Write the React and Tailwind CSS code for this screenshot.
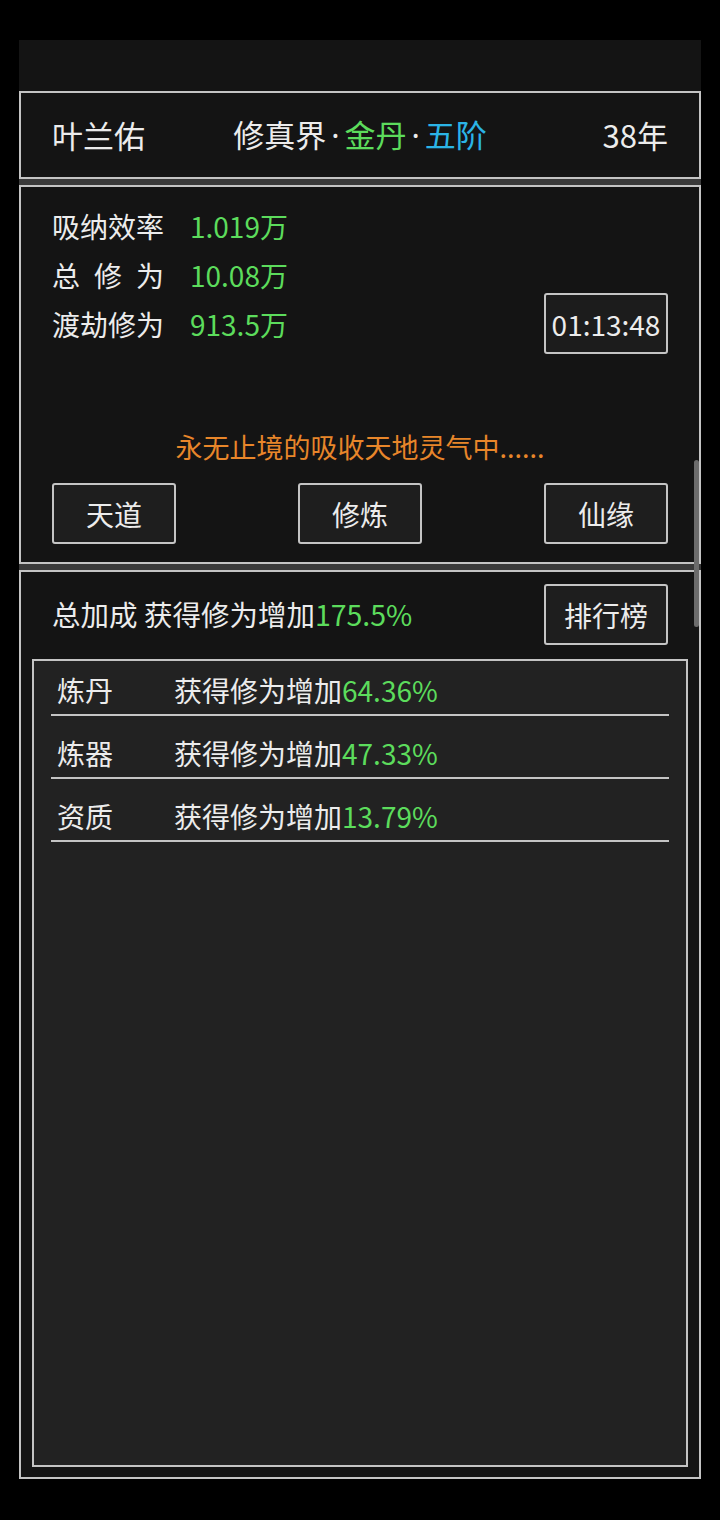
const font = { fontFamily: '"Noto Sans CJK SC", "Noto Sans", sans-serif' };
const dotFont = { fontFamily: '"Noto Sans", sans-serif' };

function Btn({ children, className = "" }) {
  return (
    <div
      className={
        "flex h-[61px] w-[124px] items-center justify-center rounded-[3px] border-2 border-[#c4c4c4] bg-[#1e1e1e] text-[28px] text-[#ececec] " +
        className
      }
    >
      {children}
    </div>
  );
}

const stats = [
  { label: ["吸", "纳", "效", "率"], value: "1.019万" },
  { label: ["总", "修", "为"], value: "10.08万" },
  { label: ["渡", "劫", "修", "为"], value: "913.5万" },
];

const bonus = [
  { name: "炼丹", value: "64.36%" },
  { name: "炼器", value: "47.33%" },
  { name: "资质", value: "13.79%" },
];

export default function App() {
  return (
    <div className="h-[1520px] w-[720px] bg-black px-[19px] pt-[40px]" style={font}>
      <div className="relative flex flex-col bg-[#141414] text-[#ececec]">
        <div className="h-[51px]" />

        {/* 顶部信息 */}
        <div className="grid h-[88px] grid-cols-[1fr_auto_1fr] items-center border-2 border-[#c4c4c4] px-[31px] text-[31px]">
          <span>叶兰佑</span>
          <span>
            修真界<span className="mx-[5px]" style={dotFont}>·</span>
            <span className="text-[#5cdc5c]">金丹</span>
            <span className="mx-[5px]" style={dotFont}>·</span>
            <span className="text-[#2bb4e6]">五阶</span>
          </span>
          <span className="justify-self-end">38年</span>
        </div>

        <div className="h-[6px] bg-[#3a3a3a]" />

        {/* 修为面板 */}
        <div className="flex h-[379px] flex-col border-2 border-[#c4c4c4] px-[31px] pb-[18px] pt-[15px]">
          <div className="flex items-end justify-between">
            <div className="flex flex-col text-[28px] leading-[49px]">
              {stats.map((s) => (
                <div key={s.value} className="flex">
                  <span className="flex w-[112px] justify-between">
                    {s.label.map((c, i) => (
                      <span key={i}>{c}</span>
                    ))}
                  </span>
                  <span className="ml-[26px] text-[#5cdc5c]">{s.value}</span>
                </div>
              ))}
            </div>
            <div className="mb-[-5px] flex h-[61px] w-[124px] items-center justify-center rounded-[3px] border-2 border-[#c4c4c4] bg-[#1c1c1c] text-[28px]">
              01:13:48
            </div>
          </div>
          <div className="mt-auto text-center text-[27px] leading-[40px] text-[#e8862a]">
            永无止境的吸收天地灵气中......
          </div>
          <div className="mt-[16px] flex justify-between">
            <Btn>天道</Btn>
            <Btn>修炼</Btn>
            <Btn>仙缘</Btn>
          </div>
        </div>

        <div className="h-[6px] bg-[#3a3a3a]" />

        {/* 加成面板 */}
        <div className="flex h-[909px] flex-col border-2 border-[#c4c4c4] px-[11px] pb-[10px] pt-[12px]">
          <div className="flex items-center justify-between px-[20px]">
            <span className="text-[28.5px]">
              总加成 获得修为增加<span className="text-[#5cdc5c]">175.5%</span>
            </span>
            <Btn>排行榜</Btn>
          </div>
          <div className="mt-[14px] flex-1 border-2 border-[#c4c4c4] bg-[#222222] px-[17px]">
            {bonus.map((b) => (
              <div
                key={b.name}
                className="flex h-[63px] items-end border-b-2 border-[#c4c4c4] pb-[6px] pl-[6px] text-[28px] leading-[36px] first:h-[55px]"
              >
                <span className="w-[117px]">{b.name}</span>
                <span>
                  获得修为增加<span className="text-[#5cdc5c]">{b.value}</span>
                </span>
              </div>
            ))}
          </div>
        </div>

        {/* 滚动条 */}
        <div className="absolute right-[2px] top-[420px] h-[167px] w-[5px] rounded-full bg-[#6c6c6c]" />
      </div>
    </div>
  );
}
